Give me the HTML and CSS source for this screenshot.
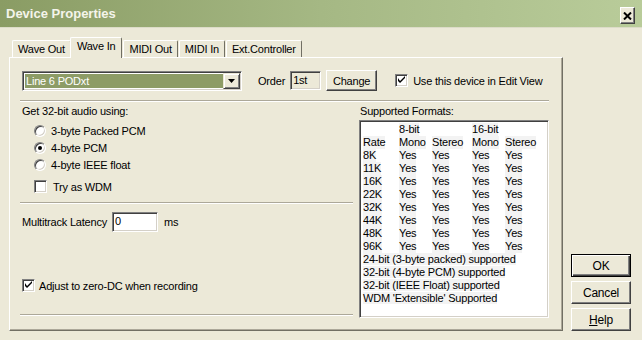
FILE: index.html
```html
<!DOCTYPE html>
<html lang="en">
<head>
    <meta charset="utf-8">
    <title>Device Properties</title>
    <link rel="stylesheet" href="styles.css">
</head>
<body>

<div class="window">

    <div class="titlebar">
        <span class="title">Device Properties</span>
        <span class="close">
            <svg width="9" height="8" viewBox="0 0 9 8"><path d="M1 0.5 L8 7.5 M8 0.5 L1 7.5" stroke="#000" stroke-width="2"/></svg>
        </span>
    </div>

    <div class="main">

        <div class="tabbox">
            <div class="tabs">
                <span class="tab">Wave Out</span>
                <span class="tab active">Wave In</span>
                <span class="tab">MIDI Out</span>
                <span class="tab">MIDI In</span>
                <span class="tab">Ext.Controller</span>
            </div>

            <div class="panel">
                <div class="top-row">
                    <div class="combo">
                        <span class="combo-value">Line 6 PODxt</span>
                        <span class="combo-btn">
                            <svg width="7" height="4" viewBox="0 0 7 4"><path d="M0 0 H7 L3.5 4 Z" fill="#000"/></svg>
                        </span>
                    </div>
                    <span class="order-label">Order</span>
                    <span class="field field-ro">1st</span>
                    <span class="button change">Change</span>
                    <span class="check checked edit-view"></span>
                    <span class="check-label">Use this device in Edit View</span>
                </div>

                <div class="sep"></div>

                <div class="columns">
                    <div class="left">
                        <div class="caption">Get 32-bit audio using:</div>
                        <div class="radios">
                            <div class="option"><span class="radio"></span>3-byte Packed PCM</div>
                            <div class="option"><span class="radio on"></span>4-byte PCM</div>
                            <div class="option"><span class="radio"></span>4-byte IEEE float</div>
                            <div class="option wdm"><span class="check"></span>Try as WDM</div>
                        </div>

                        <div class="sep sep-left"></div>

                        <div class="latency">
                            Multitrack Latency
                            <span class="field latency-field">0</span>
                            ms
                        </div>

                        <div class="option zero-dc"><span class="check checked"></span>Adjust to zero-DC when recording</div>

                        <div class="sep sep-bottom"></div>
                    </div>

                    <div class="right">
                        <div class="caption">Supported Formats:</div>
                        <div class="listbox">
                            <div class="grid">
                                <span></span><span class="t">8-bit</span><span></span><span class="t">16-bit</span><span></span>
                                <span class="t">Rate</span><span class="t">Mono</span><span class="t">Stereo</span><span class="t">Mono</span><span class="t">Stereo</span>
                                <span class="t">8K</span><span class="t">Yes</span><span class="t">Yes</span><span class="t">Yes</span><span class="t">Yes</span>
                                <span class="t">11K</span><span class="t">Yes</span><span class="t">Yes</span><span class="t">Yes</span><span class="t">Yes</span>
                                <span class="t">16K</span><span class="t">Yes</span><span class="t">Yes</span><span class="t">Yes</span><span class="t">Yes</span>
                                <span class="t">22K</span><span class="t">Yes</span><span class="t">Yes</span><span class="t">Yes</span><span class="t">Yes</span>
                                <span class="t">32K</span><span class="t">Yes</span><span class="t">Yes</span><span class="t">Yes</span><span class="t">Yes</span>
                                <span class="t">44K</span><span class="t">Yes</span><span class="t">Yes</span><span class="t">Yes</span><span class="t">Yes</span>
                                <span class="t">48K</span><span class="t">Yes</span><span class="t">Yes</span><span class="t">Yes</span><span class="t">Yes</span>
                                <span class="t">96K</span><span class="t">Yes</span><span class="t">Yes</span><span class="t">Yes</span><span class="t">Yes</span>
                            </div>
                            <div class="line"><span class="t">24-bit (3-byte packed) supported</span></div>
                            <div class="line"><span class="t">32-bit (4-byte PCM) supported</span></div>
                            <div class="line"><span class="t">32-bit (IEEE Float) supported</span></div>
                            <div class="line"><span class="t">WDM 'Extensible' Supported</span></div>
                        </div>
                    </div>
                </div>
            </div>
        </div>

        <div class="side">
            <span class="button default">OK</span>
            <span class="button">Cancel</span>
            <span class="button"><u>H</u>elp</span>
        </div>

    </div>

</div>

</body>
</html>
```

FILE: styles.css
```css
* {
    margin: 0;
    padding: 0;
    box-sizing: border-box;
}

body {
    background-color: #ece9d8;
    font-family: "Liberation Sans", Arial, sans-serif;
    font-size: 11px;
    letter-spacing: -0.2px;
    color: #000;
}

.window {
    width: 642px;
    height: 340px;
    display: flex;
    flex-direction: column;
    background-color: #ece9d8;
    overflow: hidden;
}

/* title bar */

.titlebar {
    height: 28px;
    display: flex;
    align-items: center;
    justify-content: space-between;
    padding: 0 7px 0 6px;
    background: linear-gradient(to right, #8a9c64, #a5b884 50%, #b9cc9a);
    border-bottom: 1px solid #dcdcc8;
}

.title {
    color: #f4f4ea;
    font-size: 13px;
    font-weight: bold;
    letter-spacing: 0;
    margin-top: -1px;
}

.close {
    width: 15px;
    height: 17px;
    display: flex;
    align-items: center;
    justify-content: center;
    background-color: #ece9d8;
    border: 1px solid;
    border-color: #fff #404040 #404040 #fff;
    box-shadow: inset -1px -1px 0 #808080;
    margin-top: 4px;
}

/* tabs */

.main {
    flex: 1;
    display: flex;
}

.tabbox {
    width: 554px;
    margin: 9px 0 0 9px;
    display: flex;
    flex-direction: column;
}

.tabs {
    display: flex;
    align-items: flex-end;
    height: 20px;
    padding-left: 3px;
}

.tab {
    height: 17px;
    padding: 0 5px;
    line-height: 16px;
    border: 1px solid;
    border-color: #fff #716f64 transparent #fff;
    border-bottom: none;
    border-radius: 2px 2px 0 0;
    margin-right: 1px;
}

.tab.active {
    height: 21px;
    margin: 0 -1px -1px -2px;
    padding: 0 6px;
    line-height: 16px;
    background-color: #ece9d8;
    position: relative;
    z-index: 1;
}

.tab.active + .tab {
    margin-left: 2px;
}

.panel {
    height: 274px;
    border: 1px solid;
    border-color: #fff #716f64 #716f64 #fff;
    box-shadow: inset -1px -1px 0 #aca899;
    padding: 12px 13px 0 10px;
    display: flex;
    flex-direction: column;
}

/* first row */

.top-row {
    display: flex;
    align-items: center;
    height: 21px;
    padding-left: 2px;
}

.combo {
    width: 220px;
    height: 20px;
    display: flex;
    align-items: center;
    background-color: #fff;
    border: 1px solid;
    border-color: #808080 #fff #fff #808080;
    box-shadow: inset 1px 1px 0 #404040, inset -1px -1px 0 #d4d0c8;
    padding: 2px;
}

.combo-value {
    flex: 1;
    height: 14px;
    line-height: 14px;
    padding-left: 1px;
    color: #fff;
    background-color: #8d9c66;
}

.combo-btn {
    width: 17px;
    height: 16px;
    margin-right: -1px;
    display: flex;
    align-items: center;
    justify-content: center;
    background-color: #ece9d8;
    border: 1px solid;
    border-color: #ece9d8 #404040 #404040 #ece9d8;
    box-shadow: inset 1px 1px 0 #fff, inset -1px -1px 0 #808080;
}

.order-label {
    margin-left: 16px;
}

.field {
    display: inline-block;
    height: 19px;
    line-height: 16px;
    padding-left: 2px;
    background-color: #fff;
    border: 1px solid;
    border-color: #808080 #fff #fff #808080;
    box-shadow: inset 1px 1px 0 #404040, inset -1px -1px 0 #d4d0c8;
}

.field-ro {
    width: 31px;
    margin-left: 5px;
    background-color: #ece9d8;
}

.button {
    display: flex;
    align-items: center;
    justify-content: center;
    height: 23px;
    width: 60px;
    background-color: #ece9d8;
    border: 1px solid;
    border-color: #fff #404040 #404040 #fff;
    box-shadow: inset -1px -1px 0 #808080;
    font-size: 12px;
}

.button u {
    text-decoration: underline;
}

.change {
    width: 51px;
    height: 21px;
    margin-left: 5px;
    font-size: 11px;
}

.check {
    position: relative;
    display: inline-block;
    flex: none;
    width: 13px;
    height: 13px;
    background-color: #fff;
    border: 1px solid;
    border-color: #808080 #fff #fff #808080;
    box-shadow: inset 1px 1px 0 #404040, inset -1px -1px 0 #d4d0c8;
}

.check.checked::after {
    content: "";
    position: absolute;
    left: 2px;
    top: 1px;
    width: 7px;
    height: 7px;
    background: url("data:image/svg+xml,%3Csvg xmlns='http://www.w3.org/2000/svg' width='7' height='7'%3E%3Cpath d='M0 2 L0 5 L2 7 L7 2 L7 0 L2 5 Z' fill='%23000'/%3E%3C/svg%3E") no-repeat;
}

.edit-view {
    margin-left: 18px;
}

.check-label {
    margin-left: 5px;
}

.sep {
    height: 2px;
    border-top: 1px solid #aca899;
    border-bottom: 1px solid #fff;
    margin-top: 9px;
}

/* columns */

.columns {
    flex: 1;
    display: flex;
    gap: 5px;
}

.left {
    width: 333px;
    display: flex;
    flex-direction: column;
}

.caption {
    height: 13px;
    line-height: 13px;
    margin: 3px 0 0 2px;
}

.radios {
    padding-left: 14px;
}

.option {
    display: flex;
    align-items: center;
    height: 17px;
}

.radio {
    position: relative;
    width: 12px;
    height: 12px;
    margin-right: 5px;
    border-radius: 50%;
    background-color: #fff;
    border: 1px solid;
    border-color: #808080 #fff #fff #808080;
    box-shadow: inset 1px 1px 0 #404040, inset -1px -1px 0 #d4d0c8;
}

.radio.on::after {
    content: "";
    position: absolute;
    left: 3px;
    top: 3px;
    width: 4px;
    height: 4px;
    border-radius: 50%;
    background-color: #000;
}

.radios .option:first-child {
    margin-top: 4px;
}

.wdm {
    margin-top: 5px;
}

.wdm .check {
    margin-right: 6px;
}

.sep-left {
    margin-top: 7px;
}

.latency {
    display: flex;
    align-items: center;
    margin: 8px 0 0 2px;
    height: 20px;
}

.latency-field {
    width: 46px;
    height: 20px;
    margin: 0 6px 0 5px;
    line-height: 17px;
}

.zero-dc {
    margin: 45px 0 0 2px;
}

.zero-dc .check {
    margin-right: 4px;
}

.sep-bottom {
    margin-top: 20px;
}

/* supported formats */

.right {
    flex: 1;
    display: flex;
    flex-direction: column;
}

.listbox {
    height: 198px;
    margin-top: 2px;
    margin-left: 1px;
    padding: 2px 0 0 3px;
    background-color: #fff;
    border: 1px solid;
    border-color: #808080 #fff #fff #808080;
    box-shadow: inset 1px 1px 0 #404040, inset -1px -1px 0 #d4d0c8;
    line-height: 13px;
}

.grid {
    display: grid;
    grid-template-columns: 36px 33px 40px 33px auto;
}

.grid span, .line {
    height: 13px;
}

.t {
    background-color: #f3f3f3;
}

.grid .t {
    justify-self: start;
}

/* dialog buttons */

.side {
    flex: 1;
    display: flex;
    flex-direction: column;
    align-items: flex-start;
    gap: 4px;
    padding: 226px 0 0 8px;
}

.side .button {
    width: 60px;
}

.button.default {
    border-color: #000;
    box-shadow: inset 1px 1px 0 #fff, inset -1px -1px 0 #404040, inset -2px -2px 0 #808080;
}
```
